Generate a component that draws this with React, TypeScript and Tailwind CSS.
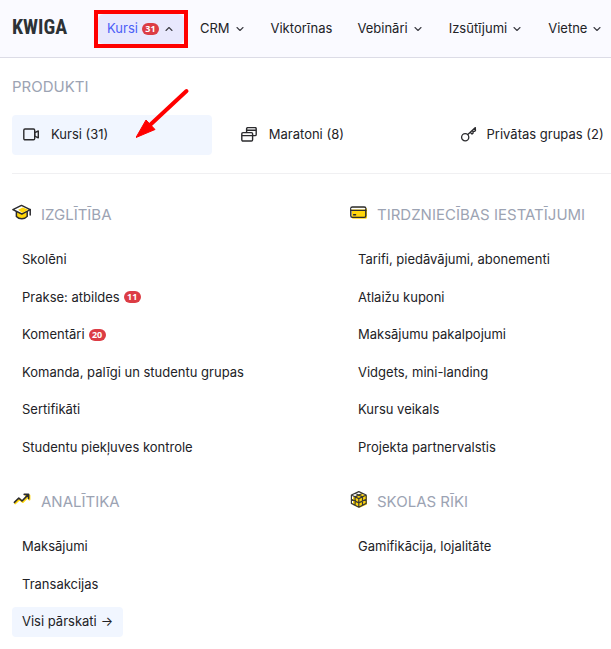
import type { ReactNode } from 'react';

interface MenuLink {
  label: string;
  count?: number;
  highlighted?: boolean;
}

interface MenuSection {
  title: string;
  icon: ReactNode;
  links: MenuLink[];
}

interface NavItem {
  label: string;
  count?: number;
  active?: boolean;
  hasMenu?: boolean;
}

const NAV_ITEMS: NavItem[] = [
  { label: 'Kursi', count: 31, active: true, hasMenu: true },
  { label: 'CRM', hasMenu: true },
  { label: 'Viktorīnas' },
  { label: 'Vebināri', hasMenu: true },
  { label: 'Izsūtījumi', hasMenu: true },
  { label: 'Vietne', hasMenu: true },
];

function VideoIcon() {
  return (
    <svg className="h-4 w-4 shrink-0" viewBox="0 0 16 16" fill="none" stroke="#2b2b2e" strokeWidth="1.4" strokeLinejoin="round">
      <rect x="0.8" y="2" width="10.9" height="10.8" rx="1.2" />
      <path d="M11.7 5.6l3.6-1.6v6.8l-3.6-1.6z" />
    </svg>
  );
}

function CardsIcon() {
  return (
    <svg className="h-4 w-4 shrink-0" viewBox="0 0 16 16" fill="none" stroke="#2b2b2e" strokeWidth="1.4" strokeLinejoin="round">
      <rect x="0.8" y="5.6" width="10.8" height="8.4" rx="1.2" />
      <path d="M0.8 8.6h10.8M5.6 5.4V1.8a1.2 1.2 0 0 1 1.2-1.2h7.2a1.2 1.2 0 0 1 1.2 1.2v5.6a1.2 1.2 0 0 1-1.2 1.2h-2.2M5.6 3.2h9.6" />
    </svg>
  );
}

function KeyIcon() {
  return (
    <svg className="h-4 w-4 shrink-0 overflow-visible" viewBox="-2 0 16 16" fill="none" stroke="#2b2b2e" strokeWidth="1.3" strokeLinecap="round" strokeLinejoin="round">
      <circle cx="4.2" cy="10.2" r="3.6" />
      <path d="M6.8 7.6L14.4 0.6M9.4 5.4l1.6 1.6 1.2-1.1-.4-1.8 1.9.2.8-.8-.2-2.6" />
    </svg>
  );
}

function GraduationIcon() {
  return (
    <svg className="h-5 w-5 shrink-0" viewBox="0 0 20 20" fill="none" stroke="#2b2b2e" strokeWidth="1.5" strokeLinejoin="round" strokeLinecap="round">
      <path d="M4.4 8.4v5c2.8 3.2 8.2 3.2 10.8 0v-5" fill="#ffd60a" />
      <path d="M0.9 6.6l8.6-4.2L18.2 6.6l-8.4 4.4z" fill="#fff" />
      <path d="M6.2 6.8l4.6-2.4 5.6 2.4-6.2 3.2z" fill="#ffd60a" stroke="none" />
      <path d="M18.2 6.6V12" />
    </svg>
  );
}

function CreditCardIcon() {
  return (
    <svg className="h-5 w-5 shrink-0" viewBox="-1 0 20 20" fill="none" stroke="#2b2b2e" strokeWidth="1.4" strokeLinecap="round">
      <rect x="2.8" y="4.8" width="15.2" height="11" rx="1.6" fill="#ffd60a" stroke="none" />
      <rect x="1.8" y="4" width="15" height="10.4" rx="1.6" />
      <path d="M3 5.8h12.6" stroke="#fff" strokeWidth="1.6" />
      <path d="M1.8 7.4h15M4.6 11.8h2" />
    </svg>
  );
}

function TrendIcon() {
  return (
    <svg className="h-5 w-5 shrink-0" viewBox="0 0 20 20" fill="none" strokeWidth="1.6" strokeLinejoin="round" strokeLinecap="round">
      <path d="M3.2 13.4l4.4-4.2 3.2 2.8 6.4-6.4M13.8 5.6h3.6v4" stroke="#ffd60a" strokeWidth="2" />
      <path d="M2.4 12.4l4.4-4.4 3.2 3 6.2-6.4M12.2 4.4h4.4v4.2" stroke="#2b2b2e" />
    </svg>
  );
}

function CubeIcon() {
  return (
    <svg className="h-5 w-5 shrink-0" viewBox="-1 0 20 20" fill="none" stroke="#3a3a36" strokeWidth="1.2" strokeLinejoin="round">
      <path d="M10.6 3l7.4 3v8.4l-7.4 3.4L4 15V6z" fill="#ffd60a" stroke="none" />
      <path d="M9.8 1.6L2.4 5v3l7.4-3.8 3.4-1z" fill="#fff" stroke="none" />
      <path d="M9.8 1.6L17.2 5v8.4l-7.4 3.8-7.4-3.8V5zM2.4 5l7.4 3.6L17.2 5M9.8 8.6v8.6M6.1 3.3l7.4 3.6v8.4M13.5 3.3L6.1 6.9v8.4M2.4 9.2l7.4 3.7 7.4-3.7" />
    </svg>
  );
}

const PRODUCTS = [
  { label: 'Kursi (31)', icon: <VideoIcon />, selected: true },
  { label: 'Maratoni (8)', icon: <CardsIcon />, selected: false },
  { label: 'Privātas grupas (2)', icon: <KeyIcon />, selected: false },
];

const SECTIONS: MenuSection[] = [
  {
    title: 'IZGLĪTĪBA',
    icon: <GraduationIcon />,
    links: [
      { label: 'Skolēni' },
      { label: 'Prakse: atbildes', count: 11 },
      { label: 'Komentāri', count: 20 },
      { label: 'Komanda, palīgi un studentu grupas' },
      { label: 'Sertifikāti' },
      { label: 'Studentu piekļuves kontrole' },
    ],
  },
  {
    title: 'TIRDZNIECĪBAS IESTATĪJUMI',
    icon: <CreditCardIcon />,
    links: [
      { label: 'Tarifi, piedāvājumi, abonementi' },
      { label: 'Atlaižu kuponi' },
      { label: 'Maksājumu pakalpojumi' },
      { label: 'Vidgets, mini-landing' },
      { label: 'Kursu veikals' },
      { label: 'Projekta partnervalstis' },
    ],
  },
  {
    title: 'ANALĪTIKA',
    icon: <TrendIcon />,
    links: [
      { label: 'Maksājumi' },
      { label: 'Transakcijas' },
      { label: 'Visi pārskati', highlighted: true },
    ],
  },
  {
    title: 'SKOLAS RĪKI',
    icon: <CubeIcon />,
    links: [{ label: 'Gamifikācija, lojalitāte' }],
  },
];

function Badge({ count }: { count: number }) {
  return (
    <span className="flex h-3 min-w-[17px] items-center justify-center rounded-full bg-[#dc3c44] px-[3px] font-['Open_Sans','Noto_Sans',sans-serif] text-[9px] leading-3 font-bold text-white">
      {count}
    </span>
  );
}

function Chevron({ up }: { up?: boolean }) {
  return (
    <svg className="h-3 w-3 shrink-0" viewBox="0 0 12 12" fill="none" stroke="#3c3c43" strokeWidth="1.1" strokeLinecap="round" strokeLinejoin="round">
      <path d={up ? 'M3 7.5l3-3 3 3' : 'M3 4.5l3 3 3-3'} />
    </svg>
  );
}

function Header() {
  return (
    <header className="flex h-[58px] items-center border-b border-[#dcdce6] bg-[#fafaff] pl-3">
      <a
        href="#"
        className="w-[77px] shrink-0 pb-1 font-['Roboto_Condensed','Liberation_Sans',sans-serif] text-[20px] leading-6 font-bold text-[#2d3235]"
      >
        KWIGA
      </a>
      <nav className="flex gap-[7px] pl-[9px]">
        {NAV_ITEMS.map((item) => (
          <div key={item.label} className="relative shrink-0">
            <button
              type="button"
              className={`flex h-[30px] items-center gap-1 rounded-md px-[9px] ${
                item.active ? 'bg-[#e8e8fd] text-[#4c5ef7]' : ''
              }`}
            >
              {item.label}
              {item.count && <Badge count={item.count} />}
              {item.hasMenu && <Chevron up={item.active} />}
            </button>
            {item.active && (
              <div className="pointer-events-none absolute -inset-1 border-4 border-[#ff0000]" />
            )}
          </div>
        ))}
      </nav>
    </header>
  );
}

function Products() {
  return (
    <section className="border-b border-[#f0f0f2] pb-[18px]">
      <h2 className="text-[15px] leading-6 text-[#9ca3b3]">PRODUKTI</h2>
      <div className="mt-4 grid grid-cols-[11fr_11fr_9fr] gap-[18px]">
        {PRODUCTS.map((product) => (
          <a
            key={product.label}
            href="#"
            className={`relative flex h-10 items-center gap-3 rounded-sm pl-[11px] whitespace-nowrap ${
              product.selected ? 'bg-[#f1f6ff]' : ''
            }`}
          >
            {product.icon}
            {product.label}
            {product.selected && (
              <svg className="pointer-events-none absolute right-[22px] bottom-4 h-[51px] w-[54px]" viewBox="0 0 54 51">
                <path d="M50.5 3L14 37" stroke="#ff0000" strokeWidth="4" strokeLinecap="round" />
                <path d="M0 49.5L10 32l9 9.5z" fill="#ff0000" stroke="#ff0000" strokeLinejoin="round" />
              </svg>
            )}
          </a>
        ))}
      </div>
    </section>
  );
}

function Section({ title, icon, links }: MenuSection) {
  return (
    <section>
      <h2 className="flex h-6 items-center gap-[9px] text-[15px] leading-6 whitespace-nowrap text-[#9ca3b3]">
        <span className="pb-1">{icon}</span>
        {title}
      </h2>
      <ul className="mt-[18px] flex flex-col items-start gap-2">
        {links.map((link) => (
          <li key={link.label}>
            <a
              href="#"
              className={`flex items-center gap-1 rounded-sm px-[10px] py-[5px] leading-normal ${
                link.highlighted ? 'bg-[#f1f6ff]' : ''
              }`}
            >
              {link.label}
              {link.highlighted && <span>→</span>}
              {link.count && <Badge count={link.count} />}
            </a>
          </li>
        ))}
      </ul>
    </section>
  );
}

export default function App() {
  return (
    <div className="min-h-screen overflow-hidden bg-white font-['Inter','Noto_Sans',sans-serif] text-[13px] text-[#222226]">
      <Header />
      <main className="pt-[17px] pl-3">
        <Products />
        <div className="grid grid-cols-[4fr_3fr] gap-y-7 pt-[29px] pr-[11px] pb-3">
          {SECTIONS.map((section) => (
            <Section key={section.title} {...section} />
          ))}
        </div>
      </main>
    </div>
  );
}
